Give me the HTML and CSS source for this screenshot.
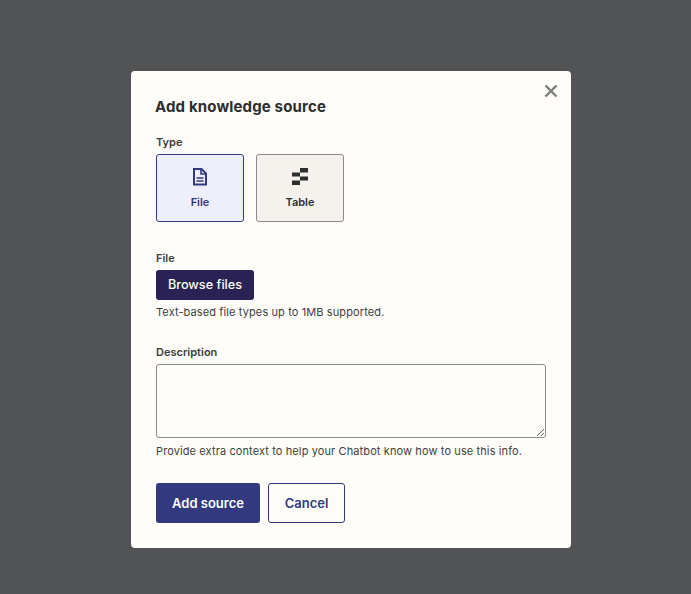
FILE: index.html
```html
<!DOCTYPE html>
<html lang="en">
<head>
<meta charset="UTF-8" />
<title>Add knowledge source</title>
<link rel="stylesheet" href="styles.css">
</head>
<body>

<div class="modal">
  <button class="close" aria-label="Close">
    <svg width="14" height="14" viewBox="0 0 14 14"><path d="M1.5 1.500l11 11M12.500 1.500l-11 11" fill="none" stroke="#7d7d7b" stroke-width="2.4"/></svg>
  </button>

  <h1>Add knowledge source</h1>

  <div class="label type-label">Type</div>
  <div class="tiles">
    <div class="tile selected">
      <svg width="16" height="18" viewBox="0 0 16 18"><path d="M2 1h7.500L14 5.500V16.500H2z" fill="none" stroke="#33397f" stroke-width="2"/><path d="M9 1v5h5" fill="none" stroke="#33397f" stroke-width="1.600"/><path d="M4.500 10h7M4.500 13h7" stroke="#33397f" stroke-width="1.500"/></svg>
      <span>File</span>
    </div>
    <div class="tile">
      <svg class="table-icon" width="17" height="18" viewBox="0 0 17 18"><path d="M9 0h8v4.500H9zM1 4.500h8V8.500H1zM9 8.500h8v4H9zM1 12.500h8v4.500H1z" fill="#2d2e2e"/></svg>
      <span>Table</span>
    </div>
  </div>

  <div class="label file-label">File</div>
  <button class="browse">Browse files</button>
  <p class="hint">Text-based file types up to 1MB supported.</p>

  <label class="label desc-label" for="description">Description</label>
  <textarea id="description"></textarea>
  <p class="hint hint-desc">Provide extra context to help your Chatbot know how to use this info.</p>

  <div class="actions">
    <button class="primary">Add source</button>
    <button class="secondary">Cancel</button>
  </div>
</div>

</body>
</html>
```
FILE: styles.css
```css
* { box-sizing: border-box; }
body {
  margin: 0;
  min-height: 100vh;
  padding: 71px 120px 0 131px;
  background-color: #525355;
  color: #2d2e2e;
  font-family: Inter, sans-serif;
}
.modal {
  position: relative;
  width: 440px;
  height: 477px;
  padding: 26px 25px 0 25px;
  background-color: #fffdf9;
  border-radius: 4px;
}
.close {
  position: absolute;
  top: 13px;
  right: 13px;
  padding: 0;
  border: none;
  background: none;
  display: flex;
}
h1 {
  margin: 0 0 0 -1px;
  font-size: 15px;
  line-height: 20px;
  font-weight: 700;
  letter-spacing: 0.15px;
}
.label {
  display: block;
  font-size: 11px;
  line-height: 16px;
  font-weight: 600;
  color: #3d3d3c;
}
.type-label { margin-top: 17px; }
.tiles {
  display: flex;
  gap: 12px;
  margin-top: 4px;
}
.tile {
  width: 88px;
  height: 68px;
  display: flex;
  flex-direction: column;
  align-items: center;
  padding-top: 13px;
  gap: 8px;
  border: 1px solid #8a8a88;
  border-radius: 3px;
  background-color: #f5f2ee;
  font-size: 11px;
  line-height: 16px;
  font-weight: 600;
}
.tile.selected {
  border-color: #33397f;
  background-color: #eeeffb;
  color: #33397f;
}
.table-icon { margin-left: -2px; }
.file-label { margin-top: 28px; }
.browse {
  display: block;
  width: 98px;
  height: 30px;
  margin-top: 4px;
  padding: 0 0 1px;
  border: none;
  border-radius: 3px;
  background-color: #2a2155;
  color: #fffdf9;
  font-family: inherit;
  font-size: 12.7px;
  font-weight: 500;
}
.hint {
  margin: 4px 0 0;
  font-size: 11px;
  line-height: 16px;
  letter-spacing: 0.11px;
  color: #3d3d3c;
}
.hint-desc { margin-top: 5px; }
.desc-label { margin-top: 24px; }
textarea {
  display: block;
  width: 390px;
  height: 74px;
  margin-top: 4px;
  border: 1px solid #8a8a88;
  border-radius: 3px;
  background-color: #fffdf9;
}
.actions {
  display: flex;
  gap: 8px;
  margin-top: 24px;
}
.actions button {
  height: 40px;
  padding: 0;
  border-radius: 3px;
  font-family: inherit;
  font-size: 13px;
  font-weight: 600;
}
.primary {
  width: 104px;
  border: none;
  background-color: #33397f;
  color: #fffdf9;
}
.secondary {
  width: 77px;
  border: 1px solid #33397f;
  background-color: #fffdf9;
  color: #33397f;
}
```
